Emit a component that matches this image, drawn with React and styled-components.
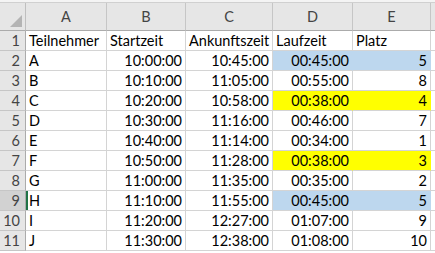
import React from "react";
import styled, { createGlobalStyle } from "styled-components";

const GlobalStyle = createGlobalStyle`
  body {
    margin: 0;
    background: #ffffff;
    font-family: Lato, "Open Sans", sans-serif;
  }
`;

const Sheet = styled.div`
  width: 435px;
  height: 253px;
  overflow: hidden;
  background: #ffffff;
`;

const TopStrip = styled.div`
  height: 3px;
  background: #f4f4f4;
  border-bottom: 1px solid #d0d0d0;
  box-sizing: border-box;
`;

const Grid = styled.div`
  display: grid;
  grid-template-columns: 26px 81px 79px 87px 80px 78px 1fr;
  grid-template-rows: 28px repeat(11, 20px);
`;

const Corner = styled.div`
  position: relative;
  background: #e6e6e6;
  border-right: 1px solid #bfbfbf;
  border-bottom: 1px solid #ababab;
  box-sizing: border-box;
  &::after {
    content: "";
    position: absolute;
    right: 3px;
    bottom: 3px;
    width: 0;
    height: 0;
    border-left: 12px solid transparent;
    border-bottom: 12px solid #b4b4b4;
  }
`;

const ColHead = styled.div`
  display: flex;
  align-items: center;
  justify-content: center;
  background: #e6e6e6;
  border-right: 1px solid #c6c6c6;
  border-bottom: 1px solid #ababab;
  box-sizing: border-box;
  font-size: 14.5px;
  color: #444444;
`;

const RowHead = styled.div`
  display: flex;
  align-items: center;
  justify-content: flex-end;
  padding-right: 5px;
  background: ${(p) => (p.$active ? "#d2d2d2" : "#e6e6e6")};
  border-right: 1px solid #ababab;
  border-bottom: 1px solid #c6c6c6;
  box-sizing: border-box;
  font-size: 14.5px;
  color: #444444;
`;

const Cell = styled.div`
  display: flex;
  align-items: center;
  justify-content: ${(p) => (p.$right ? "flex-end" : "flex-start")};
  padding: 0 3px 0 3px;
  background: ${(p) => p.$bg || "#ffffff"};
  border-right: 1px solid ${(p) => (p.$bg ? p.$bg : "#d4d4d4")};
  border-bottom: 1px solid #d4d4d4;
  box-shadow: ${(p) => (p.$selected ? "inset 2px 0 0 #217346" : "none")};
  box-sizing: border-box;
  font-size: 14.5px;
  color: #000000;
  white-space: nowrap;
  overflow: hidden;
`;

const BLUE = "#bdd7ee";
const YELLOW = "#ffff00";

const rows = [
  ["A", "10:00:00", "10:45:00", "00:45:00", "5", BLUE],
  ["B", "10:10:00", "11:05:00", "00:55:00", "8"],
  ["C", "10:20:00", "10:58:00", "00:38:00", "4", YELLOW],
  ["D", "10:30:00", "11:16:00", "00:46:00", "7"],
  ["E", "10:40:00", "11:14:00", "00:34:00", "1"],
  ["F", "10:50:00", "11:28:00", "00:38:00", "3", YELLOW],
  ["G", "11:00:00", "11:35:00", "00:35:00", "2"],
  ["H", "11:10:00", "11:55:00", "00:45:00", "5", BLUE],
  ["I", "11:20:00", "12:27:00", "01:07:00", "9"],
  ["J", "11:30:00", "12:38:00", "01:08:00", "10"],
];

const App = () => {
  return (
    <Sheet>
      <GlobalStyle />
      <TopStrip />
      <Grid>
        <Corner />
        {["A", "B", "C", "D", "E", ""].map((c, i) => (
          <ColHead key={i}>{c}</ColHead>
        ))}

        <RowHead>1</RowHead>
        <Cell>Teilnehmer</Cell>
        <Cell>Startzeit</Cell>
        <Cell>Ankunftszeit</Cell>
        <Cell>Laufzeit</Cell>
        <Cell>Platz</Cell>
        <Cell />

        {rows.map((r, i) => (
          <React.Fragment key={i}>
            <RowHead $active={i + 2 === 9}>{i + 2}</RowHead>
            <Cell $selected={i + 2 === 9}>{r[0]}</Cell>
            <Cell $right>{r[1]}</Cell>
            <Cell $right>{r[2]}</Cell>
            <Cell $right $bg={r[5]}>{r[3]}</Cell>
            <Cell $right $bg={r[5]}>{r[4]}</Cell>
            <Cell />
          </React.Fragment>
        ))}
      </Grid>
    </Sheet>
  );
};

export default App;
